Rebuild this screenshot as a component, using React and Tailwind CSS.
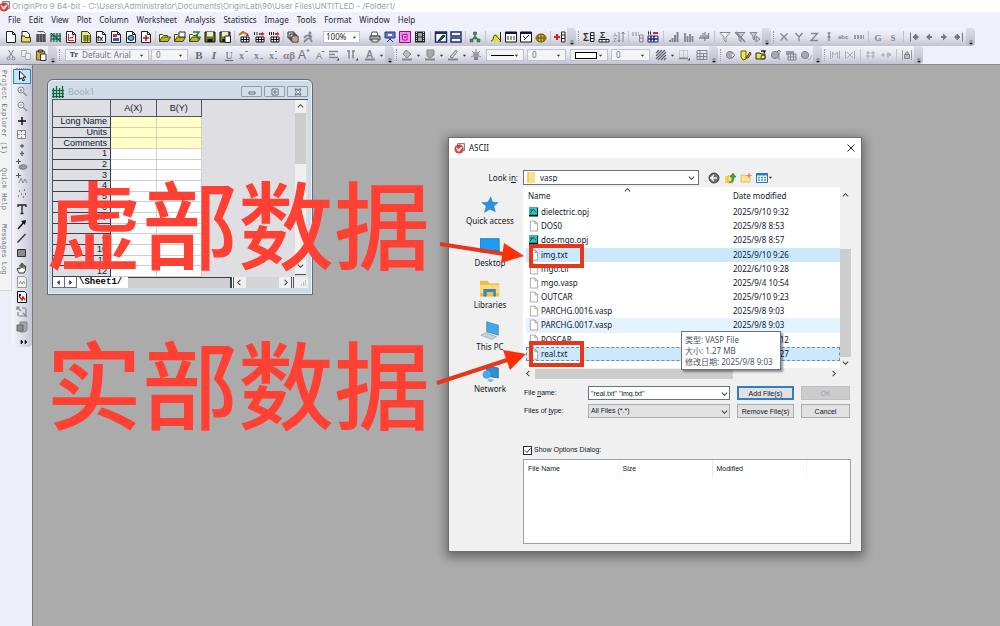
import React from 'react';

const menus = ['File', 'Edit', 'View', 'Plot', 'Column', 'Worksheet', 'Analysis', 'Statistics', 'Image', 'Tools', 'Format', 'Window', 'Help'];

const standardBar = [
    'new project', 'new folder', 'new workbook', 'new matrix', 'new graph', 'new excel', 'new function', 'new layout', 'new web', 'new note', '|',
    'open', 'open template', 'open excel', 'save', 'save template', '|',
    'import wizard', 'import single', 'import multiple', '|', 'batch', 'run', 'space',
    'zoom', 'gap', 'print', 'slide show', 'send graph', 'video', '||',
    'custom routine', 'results log', '|', 'project explorer', '||',
    'graph window', 'command window', 'script window', 'code builder', '|', 'add column', 'more', 'grip',
    'column stats', 'row stats', 'sort', '|', 'set values', 'random values', '||',
    'bars up', 'bars mixed', 'bars pair', '||', 'filter', 'filter off', 'filter apply', 'more', 'grip',
    'set x', 'set y', 'set z', 'set error', 'set label', 'set none', '|', 'group', 'subject', '||',
    'first', 'previous', 'next', 'last', 'more',
];

const formatBar = [
    'cut', 'copy', 'paste', 'more', 'grip', 'pad',
    'font', 'size', 'pad', 'bold', 'italic', 'underline', 'superscript', 'subscript', 'supersub', 'greek', 'bigger', 'smaller', 'align', 'pad', 'spacing', 'pad',
    'font color', 'caret', 'more', 'grip',
    'fill color', 'caret', 'pattern color', 'caret', 'line color', 'caret', 'lighting',
    'line style', 'line width', 'border style', 'border width',
    'hatch', 'caret', 'border bottom', 'pad', 'border grid', 'more', 'grip',
    'mask', 'mask tool', 'mask folder', 'mask swap', 'mask grid', 'mask toggle', 'more', 'grip',
    'merge', 'unmerge', '||', 'align left', 'align right', '||', 'lock', 'more',
];

const tools = [
    'pointer', 'zoom in', 'zoom out', 'screen reader', 'data reader', 'data selector', 'mask points', 'draw data', 'cluster',
    'text', 'arrow', 'line', 'rectangle', 'pan', 'insert equation', 'insert graph', 'rescale', 'rotate',
];

const files = [
    { name: 'dielectric.opj', date: '2025/9/10 9:32', type: 'opj' },
    { name: 'DOS0', date: '2025/9/8 8:53', type: 'file' },
    { name: 'dos-mgo.opj', date: '2025/9/8 8:57', type: 'opj' },
    { name: 'img.txt', date: '2025/9/10 9:26', type: 'file', row: 'bg-[#cce8ff]' },
    { name: 'mgo.cif', date: '2022/6/10 9:28', type: 'file' },
    { name: 'mgo.vasp', date: '2025/9/4 10:54', type: 'file' },
    { name: 'OUTCAR', date: '2025/9/10 9:23', type: 'file' },
    { name: 'PARCHG.0016.vasp', date: '2025/9/8 9:03', type: 'file' },
    { name: 'PARCHG.0017.vasp', date: '2025/9/8 9:03', type: 'file', row: 'bg-[#e5f3ff]' },
    { name: 'POSCAR', date: '2025/9/10 9:12', type: 'file' },
    { name: 'real.txt', date: '2025/9/10 9:27', type: 'file', row: 'bg-[#cce8ff] outline-1 -outline-offset-1 outline-dashed outline-[#6f8ba3]' },
];

const G = '#85858f';

// page outline with a folded corner, reused by all the "new ..." buttons
const Page = ({ children }) => (
    <>
        <path d="M1.5.5h6l3 3v8h-9z" fill="#fff" stroke="#222" />
        <path d="M7.500.5v3h3" fill="none" stroke="#222" />
        {children}
    </>
);

const Letter = ({ children, bold, italic, fill = G, size = 11, font = 'Liberation Sans' }) => (
    <text x="6" y="10" textAnchor="middle" fontSize={size} fill={fill} fontFamily={font} fontWeight={bold ? 700 : 400} fontStyle={italic ? 'italic' : 'normal'}>
        {children}
    </text>
);

const sheetGrid = <path d="M1 4h10M1 6h10M1 8h10M1 10h10M3 3v8M6 3v8M9 3v8" stroke="#222" fill="none" />;
const openFolder = (
    <>
        <path d="M.5 10.500V3.500h3l1 1h4v2" fill="#ffffb0" stroke="#4a4a10" />
        <path d="M.5 10.500l2.500-4.500h8.500l-2.500 4.500z" fill="#b5b52c" stroke="#4a4a10" />
    </>
);
const floppy = (
    <>
        <path d="M1 1h10v10H1z" fill="#6b7a1c" stroke="#111" />
        <path d="M3 1h6v4.500H3z" fill="#e8ecd4" />
        <path d="M3.500 8h5v3h-5z" fill="#111" />
    </>
);
const importTable = (
    <>
        <path d="M3 6h8v5H3z" fill="#fff" stroke="#111" />
        <path d="M3 8.500h8M5.500 6v5M8.500 6v5" stroke="#111" />
    </>
);
const circleMask = <circle cx="5" cy="6" r="3.600" fill="#a9a9b2" stroke={G} />;

const drawings = {
    'new project': <Page />,
    'new folder': <><path d="M2 .5h5l2.500 3v4H2z" fill="#fff" stroke="#222" /><path d="M1.500 11V5h3l1 1.500h5V11z" fill="#e8e04a" stroke="#333" /></>,
    'new workbook': <><path d="M2.500.5h6l2 2" fill="none" stroke="#555" />{sheetGrid}</>,
    'new matrix': <><path d="M1 2h10v9H1z" fill="#9fd8c8" /><path d="M1 2l10 9M1 2v9M4 2v9M7 2v9M10 2v9M1 5h10M1 8h10" stroke="#17443c" fill="none" /></>,
    'new graph': <Page><path d="M3.500 3v6.500H9M4.500 8l1.500-2 1 1.500 1.500-3" fill="none" stroke="#d0202a" /></Page>,
    'new excel': <><path d="M1.500.5h6l3 3v8h-9z" fill="#e6ea7a" stroke="#3c4414" /><path d="M3 5h7M3 7h7M3 9h7M5 4v7M7.500 4v7" stroke="#4d5a14" /></>,
    'new function': <Page><text x="2" y="9.500" fontSize="7" fontWeight="700" fontFamily="Liberation Sans" fill="#111">fx</text></Page>,
    'new layout': <Page><path d="M3 3h4v3H3z" fill="#e0292e" /><path d="M3 7h6v3H3z" fill="#3a53c8" /></Page>,
    'new web': <Page><ellipse cx="6" cy="7" rx="3" ry="2.500" fill="#4cc0c0" stroke="#116" /></Page>,
    'new note': <Page><path d="M6 4v6M3 7h6" stroke="#b0101a" strokeWidth="1.500" /></Page>,
    open: openFolder,
    'open template': <>{openFolder}<path d="M5 1h6v5H5z" fill="#fff" stroke="#333" /></>,
    'open excel': <>{openFolder}<path d="M4 1h6l-3 4 4 4" fill="none" stroke="#20803a" strokeWidth="1.500" /></>,
    save: floppy,
    'save template': <>{floppy}<path d="M6 5h5.500v6.500H6z" fill="#fff" stroke="#222" /></>,
    'import wizard': <>{importTable}<path d="M1 4l4-3 5 3" fill="none" stroke="#c07010" strokeWidth="2" /><path d="M9 2l2 3H8z" fill="#d22" /></>,
    'import single': <>{importTable}<path d="M1.500 1v3M4 1v3" stroke="#222" /><path d="M6 2h3V.5L11.500 3 9 5V4H6z" fill="#d42a2a" /></>,
    'import multiple': <>{importTable}<path d="M1.500 1v3M3.500 1v3M5.500 1v3" stroke="#222" /><path d="M7 2h2V.5L11.500 3 9 5V4H7z" fill="#d42a2a" /></>,
    batch: <><path d="M1 1h6v6H1zM3 3h6v6H3z" fill="#eee" stroke="#222" /><path d="M5 5h6v6H5z" fill="#fff" stroke="#222" /><path d="M6 7h4M6 9h4" stroke="#c22" /></>,
    run: <><circle cx="8" cy="2" r="1.500" fill={G} /><path d="M7 4L4 5 2 7M7 4l1 3-3 1-3 3M8 7l2 4M7 4l3 2" fill="none" stroke={G} strokeWidth="1.800" /></>,
    print: <><path d="M3 1h5l1 4H2z" fill="#fff" stroke="#555" /><path d="M1 5h10v4H1z" fill="#aaa" stroke="#444" /><path d="M3 8h6v3H3z" fill="#ddd" stroke="#555" /></>,
    'slide show': <><path d="M1 1h10v6H1z" fill="#5b78d8" stroke="#223a80" /><path d="M4 3h4v2H4z" fill="#fff" /><path d="M6 7v2M3 11l3-3 3 3" stroke="#223a80" fill="none" /></>,
    'send graph': <><path d="M.5.5h11v11H.5z" fill="#f88af0" stroke="#8a1080" /><path d="M3 4l5-1v6H4z" fill="#fbc0f2" stroke="#a0108c" /><circle cx="6" cy="6" r="1" fill="#a0108c" /></>,
    video: <><path d="M1 .5h10v11H1z" fill="#222" /><path d="M4 2h4v3.500H4zM4 6.500h4V10H4z" fill="#9aa" /><path d="M2.500 1v10M9.500 1v10" stroke="#ddd" strokeDasharray="1 1" /></>,
    'custom routine': <><path d="M.500 1h11v10H.5z" fill="#fff" stroke="#1a2d66" strokeWidth="1.500" /><path d="M.5 2h11" stroke="#1a2d66" strokeWidth="2" /><path d="M3 10l5-6 2 1-4 4z" fill="#163" stroke="#124" /></>,
    'results log': <><path d="M1 1h10v4H1zM1 7h10v4H1z" fill="#f2f3ff" stroke="#1c2a72" strokeWidth="1.500" /></>,
    'project explorer': <><path d="M6 3v3M6 6L2.500 9M6 6l3.500 3" stroke="#222" fill="none" /><path d="M4.500 1h3v2.500h-3zM1 8h3v3H1zM8 8h3v3H8zM4.500 6h3v2h-3z" fill="#3d9a55" stroke="#1c4a2a" strokeWidth=".5" /></>,
    'graph window': <><path d="M1 9c3 0 2-6 5-6s2 4 5 4v4H1z" fill="#e4dc3c" /><path d="M1 10c3 0 2-6 4-6s3 5 6 5" stroke="#1a6a30" fill="none" /><path d="M10.500 1v10" stroke="#222" /></>,
    'command window': <><path d="M.5 1h11v10H.5z" fill="#fff" stroke="#111" /><path d="M.5 2h11" stroke="#113" strokeWidth="2" /><path d="M2 6h8M2 8h8" stroke="#333" strokeDasharray="2 1" /></>,
    'script window': <><path d="M.5 1h11v10H.5z" fill="#fff" stroke="#111" /><path d="M.5 2h11" stroke="#113" strokeWidth="2" /><path d="M4 9l5-5M3 5l3 3" stroke="#222" /></>,
    'code builder': <><ellipse cx="6" cy="7" rx="5" ry="4" fill="#d8c024" stroke="#5a4c08" /><path d="M3 4v6M6 3v8M9 4v6M2 7h8" stroke="#5a4c08" /></>,
    'add column': <><path d="M3 3v6M0 6h6" stroke="#d8202a" strokeWidth="2" /><path d="M7.500 1h3.500v10H7.500zM7.500 4H11M7.500 7.500H11" fill="#fff" stroke="#222" /></>,
    'column stats': <><text x="0" y="9.500" fontSize="10" fontWeight="700" fontFamily="Liberation Sans" fill="#333">Σ</text><path d="M7.500 1.500h3.500v9H7.500zM7.500 4.500H11M7.500 7.500H11" fill="#fff" stroke="#222" /></>,
    'row stats': <><text x="2" y="7" fontSize="9" fontWeight="700" fontFamily="Liberation Sans" fill="#333">Σ</text><path d="M1 8.500h10v2.500H1zM4 8.500V11M8 8.500V11" fill="#fff" stroke="#222" /></>,
    sort: <><text x="0" y="5.500" fontSize="6" fontFamily="Liberation Sans" fill={G}>A</text><text x="0" y="11" fontSize="6" fontFamily="Liberation Sans" fill={G}>Z</text><path d="M6 1v10M4.500 9L6 11l1.500-2M10 11V1M8.500 3L10 1l1.500 2" stroke={G} fill="none" /></>,
    'set values': <><path d="M0 2h7M0 4h7" stroke={G} strokeDasharray="2 1" /><path d="M7.500 4h3.500v7H7.500zM7.500 7H11" fill="none" stroke={G} /></>,
    'random values': <><path d="M1 5h10v6H1z" fill="#fff" stroke="#23237c" /><path d="M4 5v6M7 5v6M1 8h10" stroke="#23237c" strokeWidth="1.500" /><path d="M1 2h4" stroke="#223" strokeWidth="3" strokeDasharray="1 1" /><path d="M6 2h5" stroke="#d22" strokeWidth="2" /></>,
    'bars up': <path d="M2 9v2M4.500 7v4M7 4v7M9.500 1v10" stroke={G} strokeWidth="2" />,
    'bars mixed': <path d="M2 2v9M4.500 5v6M7 3v8M9.500 5v6" stroke={G} strokeWidth="1.800" />,
    'bars pair': <path d="M1 7h10M3 4v3M5 2v5M7 1v9M9 4v3M10.500 2v5" stroke={G} strokeWidth="1.300" />,
    filter: <path d="M1 1.500h10L7 6v5L5 9V6z" fill="#fff" stroke={G} />,
    'filter off': <><path d="M1 1.500h10L7 6v5L5 9V6z" fill="#ccc" stroke={G} /><path d="M2 1l9 10" stroke={G} strokeWidth="1.500" /></>,
    'filter apply': <><path d="M1 1.500h7L5.500 5v4L4 8V5z" fill="#ccc" stroke={G} /><path d="M7 5l4 3-4 3z" fill="#ccc" stroke={G} /></>,
    'set x': <path d="M2.500 2.500l7 7M9.500 2.500l-7 7" stroke={G} strokeWidth="1.300" />,
    'set y': <path d="M2.500 2l3.500 4L9.500 2M6 6v4.500" stroke={G} strokeWidth="1.300" fill="none" />,
    'set z': <path d="M3 2.500h6.500L3 9.500h7" stroke={G} strokeWidth="1.300" fill="none" />,
    'set error': <path d="M4.500 2h3M6 2v8M4.500 6h3" stroke={G} strokeWidth="1.300" />,
    'set label': <text x="0" y="8" fontSize="6" fontWeight="700" fontFamily="Liberation Sans" fill={G}>abc</text>,
    'set none': <path d="M1 5h10M1 7h10" stroke={G} strokeDasharray="2 1" strokeWidth="1.500" />,
    group: <Letter font="Liberation Serif" bold size={9}>G</Letter>,
    subject: <Letter font="Liberation Serif" bold size={9}>S</Letter>,
    first: <path d="M2.500 1.500v9M10 5H8V3L5 6l3 3V7h2z" fill="#777782" stroke="#777782" />,
    previous: <path d="M9 5H7V2.500L3 6l4 3.500V7h2z" fill="#777782" />,
    next: <path d="M3 5h2V2.500L9 6 5 9.500V7H3z" fill="#777782" />,
    last: <path d="M9.500 1.500v9M2 5h2V3l3 3-3 3V7H2z" fill="#777782" stroke="#777782" />,
    cut: <><path d="M3.500 1L8 8M8.500 1L4 8" stroke={G} /><circle cx="3.500" cy="9.500" r="1.500" fill="none" stroke={G} /><circle cx="8.500" cy="9.500" r="1.500" fill="none" stroke={G} /></>,
    copy: <><path d="M1.500 1.500h5v6h-5z" fill="#eee" stroke="#aaaab2" /><path d="M5.500 4.500h5v6h-5z" fill="#eee" stroke="#aaaab2" /></>,
    paste: <><path d="M1.500 2h8v9h-8z" fill="#d0aa30" stroke="#6a5010" /><path d="M3.500 1h4v2h-4z" fill="#999" stroke="#333" /><path d="M5.500 5h5.500v6.500H5.500z" fill="#fff" stroke="#334" /></>,
    bold: <Letter bold font="Liberation Serif" fill="#6a6a74">B</Letter>,
    italic: <Letter bold italic font="Liberation Serif" fill="#6a6a74">I</Letter>,
    underline: <><Letter font="Liberation Serif" fill="#6a6a74" size={10}>U</Letter><path d="M2 11.500h8" stroke="#6a6a74" /></>,
    superscript: <><text x="1" y="9.500" fontSize="10" fontFamily="Liberation Serif" fontWeight="700" fill={G}>x</text><path d="M7 2.500h3" stroke={G} /></>,
    subscript: <><text x="1" y="9.500" fontSize="10" fontFamily="Liberation Serif" fontWeight="700" fill={G}>x</text><path d="M7 9.500h3" stroke={G} /></>,
    supersub: <><text x="1" y="9.500" fontSize="10" fontFamily="Liberation Serif" fontWeight="700" fill={G}>x</text><path d="M7 2.500h2M7 9.500h2" stroke={G} /></>,
    greek: <Letter font="Liberation Serif" size={11} bold>αβ</Letter>,
    bigger: <><text x="0" y="10" fontSize="12" fontFamily="Liberation Sans" fill="#6a6a74">A</text><path d="M10 0v3M8.500 1.500h3" stroke={G} /></>,
    smaller: <><Letter size={9} fill="#6a6a74">A</Letter><path d="M8.500 2.500h3" stroke={G} /></>,
    align: <><path d="M1 2.500h9M1 5.500h6M1 8.500h9" stroke={G} strokeWidth="1.500" /><path d="M11 9v2.500H8.500z" fill="#444" /></>,
    spacing: <><path d="M3 1.500v8M7 1.500v8M1 2h3M6 2h3" stroke={G} strokeWidth="1.500" /><path d="M12 9v2.500H9.500z" fill="#444" /></>,
    'font color': <><text x="2" y="8.500" fontSize="10" fontFamily="Liberation Sans" fontWeight="700" fill={G}>A</text><path d="M1 10.500h10" stroke={G} strokeWidth="2" /></>,
    'fill color': <><path d="M5 1l5 4-4 4-4-4z" fill="#bbb" stroke={G} /><path d="M1 10.500h10" stroke={G} strokeWidth="2" /></>,
    'pattern color': <><path d="M3 1h7v5l-4 3-3-2z" fill="#aaa" stroke={G} /><path d="M1 10.500h10" stroke={G} strokeWidth="2" /></>,
    'line color': <><path d="M3 8l6-7 1.500 1.500L5 9z" fill="#ccc" stroke={G} /><path d="M1 10.500h10" stroke={G} strokeWidth="2" /></>,
    lighting: <><path d="M6 0v3M2 2l2 2M10 2L8 4M1 8l2-1M11 8L9 7" stroke={G} /><circle cx="6" cy="6" r="3" fill="#9a9aa4" /><path d="M4 8h4v3H4z" fill={G} /></>,
    hatch: <path d="M1 4l3-3M1 7l6-6M1 10l9-9M3 11l8-8M6 11l5-5M9 11l2-2" stroke="#666670" strokeWidth="1.300" />,
    'border bottom': <><path d="M1.500 1.500h8v7h-8zM5.500 1.500v7" fill="none" stroke="#aaaab2" strokeDasharray="1 1" /><path d="M1 9.500h9" stroke={G} strokeWidth="1.500" /><path d="M12 9v2.500H9.500z" fill="#444" /></>,
    'border grid': <path d="M1 1.500h10v9H1zM1 4.500h10M1 7.500h10M4 1.500v9M7.500 4.500v6" fill="none" stroke={G} />,
    mask: <>{circleMask}<path d="M7 4l3 2-3 3" fill="#fff" stroke={G} /></>,
    'mask tool': <><path d="M1 2h5v8l-3 1-2-3z" fill="#f2e63a" stroke="#6a5e08" /><path d="M6 9l4-6 1 2-3 4z" fill="#c93" stroke="#532" /></>,
    'mask folder': <><path d="M1 4h4l1 1h4v5H1z" fill="#f0e43c" stroke="#222" /><path d="M6 2h4l-1 2" stroke="#222" fill="none" strokeWidth="1.500" /><circle cx="8" cy="8" r="2" fill="#fff380" stroke="#333" /></>,
    'mask swap': <>{circleMask}<path d="M9 1v10M7 3l2-2 2 2" stroke={G} fill="none" /></>,
    'mask grid': <><path d="M1 2h8v4H1z" fill="#99a" /><path d="M3 5h8v6H3zM5.500 5v6M8.500 5v6M3 8h8" fill="#ddd" stroke={G} /></>,
    'mask toggle': <>{circleMask}<path d="M7 9l2 2 3-5" stroke="#b0b0b8" fill="none" /></>,
    merge: <path d="M1.500 2v8M10.500 2v8M3.500 9V3L6 6l2.500-3v6" stroke="#aaaab4" fill="none" />,
    unmerge: <path d="M1.500 2v8M10.500 2v8M3 3l6 6M9 3L3 9" stroke="#aaaab4" fill="none" />,
    'align left': <path d="M3 2v8M1 4h4M1 7h4M8 2v8M6 4h4M6 7h4" stroke="#aaaab4" />,
    'align right': <path d="M1 6h4M3 4v4M6 6h5M8 3v6M10 4v3" stroke="#aaaab4" strokeWidth="1.200" />,
    lock: <><path d="M1.500 1v10M10.500 1v10" stroke="#9a9aa4" /><path d="M3.500 5.500h5v4h-5zM4.500 5c0-3 3-3 3 0" fill="#bbb" stroke={G} /></>,
    pointer: <path d="M3.500 1v8.500l2-1.800L7 11l1.500-.7L7 7.200h2.700z" fill="#fff" stroke="#111" />,
    'zoom in': <><circle cx="5" cy="5" r="3" fill="#fff" stroke={G} /><path d="M7.500 7.500L11 11M3.500 5h3M5 3.500v3" stroke={G} strokeWidth="1.200" /></>,
    'zoom out': <><circle cx="5" cy="5" r="3" fill="#fff" stroke={G} /><path d="M7.500 7.500L11 11M3.500 5h3" stroke={G} strokeWidth="1.200" /></>,
    'screen reader': <path d="M6 2v8M2 6h8" stroke="#111" strokeWidth="1.500" />,
    'data reader': <path d="M1.500 1.500h8v8h-8zM5.500 1.500v2M5.500 7.500v2M1.500 5.500h2M7.500 5.500h2M5 5.500h1" fill="#f7f7fb" stroke={G} />,
    'data selector': <path d="M6 0v4M4 2h4M6 7v5M4 9.500h4" stroke="#666" strokeWidth="1.300" />,
    'mask points': <><path d="M2.500 0v5M0 2.500h5" stroke="#555" /><ellipse cx="7" cy="8" rx="4" ry="2.200" fill="#999aa2" stroke="#777" /></>,
    'draw data': <><path d="M2.500 0v5M0 2.500h5" stroke="#555" /><path d="M3 10l2-5 2 5 2-4 2 4" fill="none" stroke={G} /></>,
    cluster: <path d="M3 3h1M8 2h1M5 6h1M9 6h1M2 8h1M7 9h1" stroke="#666" strokeWidth="1.500" />,
    text: <path d="M2 4V2h8v2M6 2v8.500M4.500 10.500h3" fill="none" stroke="#222" strokeWidth="1.300" />,
    arrow: <><path d="M2 11L8 4" stroke="#111" strokeWidth="1.500" /><path d="M10 2L9 7 5 3z" fill="#111" /></>,
    line: <path d="M1.500 10.500l8-8.500" stroke="#333" strokeWidth="1.300" />,
    rectangle: <path d="M1.500 2.500h8v7h-8z" fill="#8c8c8c" stroke="#333" />,
    pan: <path d="M3 11L1 7l1-1 2 1V3h1.300V1.500h1.400V3H8v1h1.500v4l-1.500 3zM5.300 3v3M6.700 3v3M8 4v3" fill="#fff" stroke="#222" strokeWidth=".9" />,
    'insert equation': <path d="M1.500.5h7l2 2v9h-9zM3 8l1.500-3L6 8l1.500-3L9 8" fill="#f2f2f6" stroke="#999" />,
    'insert graph': <><path d="M1.500.5h7l2 2v9h-9z" fill="#fff" stroke="#111" /><path d="M3 5l3 4 1-3 2 3" stroke="#c02020" strokeWidth="1.500" fill="none" /><path d="M3 4h2" stroke="#222" strokeWidth="2" /></>,
    rescale: <path d="M1 1l4 4M1 4V1h3M11 11L7 7M3 10h7V3M2 6v4M6 2h4" stroke={G} fill="none" strokeWidth="1.200" />,
    rotate: <><path d="M4 1h7v8l-2 2H4z" fill="#a5a5ad" stroke={G} /><path d="M1 4h6v6H1z" fill="#8d8d96" stroke="#666" /></>,
};

const Icon = ({ name }) => (
    <svg viewBox="0 0 12 12" className="size-3 overflow-visible" aria-hidden="true">{drawings[name]}</svg>
);

const Chevron = ({ dir = 'down', className = '' }) => {
    const paths = { down: 'M1 3l3 3 3-3', up: 'M1 5l3-3 3 3', left: 'M5 1L2 4l3 3', right: 'M3 1l3 3-3 3' };
    return (
        <svg viewBox="0 0 8 8" className={`size-[7px] ${className}`} aria-hidden="true">
            <path d={paths[dir]} fill="none" stroke="#444" strokeWidth="1.200" />
        </svg>
    );
};

const Triangle = () => (
    <svg viewBox="0 0 6 6" className="w-[5px] h-[5px]" aria-hidden="true"><path d="M1 2h4L3 4.500z" fill="#333" /></svg>
);

const Combo = ({ label, className, children }) => (
    <button aria-label={label} className={`h-3 flex items-center justify-between border border-[#c2c2ce] bg-[#f3f3f8] px-1 text-[8px] leading-none text-gray-500 shrink-0 ${className}`}>
        {children}
        <Triangle />
    </button>
);

const BarItem = ({ name }) => {
    switch (name) {
        case '|':
            return <span className="w-1 h-3 flex justify-center shrink-0"><span className="w-px h-full bg-[#c3c3d2]"></span></span>;
        case '||':
            return <span className="w-[6px] h-3 flex justify-center shrink-0"><span className="w-px h-full bg-[#c3c3d2]"></span></span>;
        case 'gap':
            return <span className="w-[7px] shrink-0"></span>;
        case 'space':
            return <span className="w-2 shrink-0"></span>;
        case 'pad':
            return <span className="w-[3px] shrink-0"></span>;
        case 'grip':
            return <span className="w-[5px] h-3 flex justify-center shrink-0"><span className="border-l border-dotted border-[#9a9ab0] h-full"></span></span>;
        case 'more':
            return (
                <button aria-label="Toolbar options" className="w-[9px] h-full flex items-end justify-center rounded-r-sm bg-gradient-to-b from-[#dcdce6] to-[#bcbcc8] shrink-0">
                    <svg viewBox="0 0 6 6" className="w-[6px] h-[6px]" aria-hidden="true"><path d="M1.500 1h3M1.500 3h3L3 4.500z" fill="#111" stroke="#111" strokeWidth=".5" /></svg>
                </button>
            );
        case 'caret':
            return <button aria-label="Choose" className="w-2 h-full flex items-center justify-center shrink-0"><Triangle /></button>;
        case 'zoom':
            return <Combo label="Zoom" className="w-[37px] !bg-white !text-gray-800 !px-[2px]">100%</Combo>;
        case 'font':
            return (
                <Combo label="Font" className="w-[84px] mr-[2px]">
                    <span className="flex items-center gap-1"><b className="font-serif text-gray-700">Tr</b><span>Default: Arial</span></span>
                </Combo>
            );
        case 'size':
            return <Combo label="Font size" className="w-[37px]">0</Combo>;
        case 'line style':
            return <Combo label="Line style" className="w-[38px] ml-[3px] mr-[3px]"><span className="w-6 h-px bg-black"></span></Combo>;
        case 'line width':
            return <Combo label="Line width" className="w-[39px] mr-[4px]">0</Combo>;
        case 'border style':
            return <Combo label="Border style" className="w-[38px] mr-[3px]"><span className="w-[22px] h-[7px] border border-black bg-white"></span></Combo>;
        case 'border width':
            return <Combo label="Border width" className="w-[39px] mr-[3px]">0</Combo>;
        default:
            return <button aria-label={name} className="w-[15px] h-full flex items-center justify-center shrink-0"><Icon name={name} /></button>;
    }
};

const Toolbar = ({ label, items }) => (
    <div className="flex">
        <div role="toolbar" aria-label={label} className="flex items-center h-[18px] pl-[3px] rounded-r bg-gradient-to-b from-[#f3f3fb] via-[#e4e4ef] to-[#c3c3d0]">
            {items.map((name, index) => <BarItem key={index} name={name} />)}
        </div>
    </div>
);

const OriginLogo = () => (
    <svg viewBox="0 0 12 12" className="size-[11px] shrink-0" aria-hidden="true">
        <path d="M4 .5h7.500v8H4z" fill="#dde" stroke="#777" />
        <circle cx="5.500" cy="6.500" r="5" fill="#d2453f" />
        <path d="M2.500 5l3 4 3.500-5M3 8l5-3" stroke="#fff" fill="none" strokeWidth="1.100" />
    </svg>
);

const ToolPalette = () => (
    <div className="w-5 self-start rounded-b bg-gradient-to-r from-[#f4f5fc] to-[#c6c8d6] pb-[2px]">
        <div className="h-1 mx-1 border-b border-dotted border-[#9a9ab0]"></div>
        <div className="grid auto-rows-fr h-[265px]">
            {tools.map((name) => (
                <button
                    key={name}
                    aria-label={name}
                    className={`flex items-center justify-center mx-[1px] ${name === 'pointer' ? 'border border-[#3c7fb1] bg-[#c3e4f7]' : ''}`}
                >
                    <Icon name={name} />
                </button>
            ))}
        </div>
        <div className="h-[11px] flex items-end justify-end px-1">
            <svg viewBox="0 0 8 6" className="w-2 h-[6px]" aria-hidden="true"><path d="M1 1l2 2-2 2zM5 1v4l2-2z" fill="#111" stroke="#111" strokeWidth=".6" /></svg>
        </div>
    </div>
);

const WindowButton = ({ label, path }) => (
    <button aria-label={label} className="w-[21px] h-[11px] flex items-center justify-center rounded-[1px] border border-[#8e9db0] bg-[#d3dfeb]">
        <svg viewBox="0 0 8 8" className="size-2" aria-hidden="true"><path d={path} fill="#fff" stroke="#566478" /></svg>
    </button>
);

const BookWindow = () => (
    <section aria-label="Book1" className="absolute left-[14px] top-[14px] w-[266px] rounded-t-md border border-[#5f6c7b] bg-[#cfdbe7] px-[4px] pb-[6px] shadow-[inset_0_0_0_1px_#eaf1f8]">
        <header className="flex items-center h-[19px] gap-1 pt-1 text-[#a3b0bd] font-['Noto_Sans'] text-[9px]">
            <svg viewBox="0 0 12 12" className="size-3" aria-hidden="true">
                <path d="M1 3h10v8H1z" fill="#fff" />
                <path d="M0 4.500h12M0 7.500h12M0 10.500h12M1.500 2v10M4.500 0v12M7.500 2v10M10.500 0v12" stroke="#0c6b3c" strokeWidth="1.300" />
            </svg>
            <span>Book1</span>
            <div className="ml-auto flex gap-[2px]">
                <WindowButton label="Minimize" path="M1 4h6v2H1z" />
                <WindowButton label="Restore" path="M1 1h6v6H1zM3 3h2v2H3z" />
                <WindowButton label="Close" path="M1 1h2l1 2 1-2h2L5.500 4 7 7H5L4 5 3 7H1l1.500-3z" />
            </div>
        </header>
        <div className="flex border-t border-l border-gray-600 bg-[#dfdee3]">
            <table className="w-[149px] h-[177px] table-fixed border-separate border-spacing-0 font-['Liberation_Sans'] text-[9px] leading-[9px] text-gray-900">
                <thead>
                    <tr className="h-[17px]">
                        <th className="w-[58px] border-r border-b border-gray-600"></th>
                        <th className="font-normal border-r border-b border-gray-600">A(X)</th>
                        <th className="font-normal border-r border-b border-gray-600">B(Y)</th>
                    </tr>
                </thead>
                <tbody>
                    {['Long Name', 'Units', 'Comments', 1, 2, 3, 4, 5, 6, 7, 8, 9, 10, 11, 12].map((title, index) => {
                        const cell = index < 3 ? 'border-r border-b border-[#d6d6b4] bg-[#ffffc6]' : 'border-r border-b border-[#cfcfd2] bg-white';
                        return (
                            <tr key={title}>
                                <th className="p-0 pr-[3px] text-right font-normal border-r border-b border-gray-700">{title}</th>
                                <td className={cell}></td>
                                <td className={cell}></td>
                            </tr>
                        );
                    })}
                </tbody>
            </table>
            <div className="ml-auto mr-[2px] w-[11px] flex flex-col items-center bg-[#f0f0f0]">
                <Chevron dir="up" className="my-[3px]" />
                <div className="w-full h-[51px] bg-[#cdcdcd]"></div>
                <Chevron className="mt-auto mb-[5px]" />
                <div className="w-full border-t border-gray-600 h-[3px] bg-[#dfdee3]"></div>
            </div>
        </div>
        <footer className="flex items-stretch h-[11px] bg-[#f0f0f0] border-l border-gray-600">
            {['left', 'right'].map((dir) => (
                <button key={dir} aria-label={`Sheets ${dir}`} className="w-3 flex items-center justify-center border-r border-b border-gray-500 bg-white">
                    <svg viewBox="0 0 6 6" className="size-[5px]" aria-hidden="true"><path d={dir === 'left' ? 'M4.500 0v6L1 3z' : 'M1.500 0v6L5 3z'} fill="#333" /></svg>
                </button>
            ))}
            <span className="w-[51px] bg-white pl-[2px] font-['Liberation_Mono'] font-bold text-[9px] leading-[11px] whitespace-nowrap">\Sheet1/</span>
            <span className="flex-1 bg-[#cfcfd2] border-t border-r-2 border-gray-700"></span>
            <span className="w-[2px] bg-white border-r border-gray-600"></span>
            <span className="w-[57px] flex items-center justify-between px-[2px]">
                <Chevron dir="left" />
                <span className="w-[33px] h-full bg-[#d4d4d4]"></span>
                <Chevron dir="right" />
            </span>
            <span className="w-[3px] border-x border-gray-600"></span>
            <span className="w-[14px] flex items-end justify-end p-[2px]">
                <svg viewBox="0 0 6 6" className="size-[6px]" aria-hidden="true"><path d="M5 1h1M3 3h1M5 3h1M1 5h1M3 5h1M5 5h1" stroke="#999" /></svg>
            </span>
        </footer>
    </section>
);

const placeIcons = {
    'Quick access': <path d="M13 2l2 6.500 7 .6-5.300 4.200 1.700 7L12 17l-6.800 4 2.200-7.600L2 9.100l7.500-.6z" fill="#2b93dd" stroke="#1f7fc6" strokeWidth=".5" />,
    Desktop: <><path d="M0 2h23v16H0z" fill="#1f9bf0" stroke="#1577bd" /><path d="M0 16h23v2H0z" fill="#1167a8" /></>,
    Libraries: <><path d="M0 2h9l2 3h12v16H0z" fill="#e9bf45" /><path d="M0 7h23v10H0z" fill="#f9d978" /><path d="M4 21v-9h15v9h-3v-5H8v5z" fill="#4384b5" /></>,
    'This PC': <><path d="M8 1l14 4v12L8 13z" fill="#3fa9ee" stroke="#55778f" strokeWidth=".8" /><path d="M7 14l13 5-6 3-13-5z" fill="#c9d2d8" stroke="#8a979f" strokeWidth=".7" /></>,
    Network: <><path d="M7 3l15 3v12L9 16z" fill="#2c8ed8" stroke="#456" strokeWidth=".8" /><circle cx="8" cy="14" r="5" fill="#4aa8e6" /><path d="M11 19l6 1-4 3-4-2z" fill="#7fb4d8" /></>,
};

const FileIcon = ({ type }) => (
    <svg viewBox="0 0 11 12" className="w-[10px] h-3 shrink-0" aria-hidden="true">
        {type === 'opj' ? (
            <>
                <path d="M0 1h10v10H0z" fill="#111" />
                <path d="M0 1h9v8H0z" fill="#2fc8c2" />
                <path d="M1 7c2 0 2-4 3.500-4S6 6 8 6M1 4h3" stroke="#0a4a50" fill="none" />
            </>
        ) : (
            <path d="M1.500.5h5l3 3v8h-8zM6.500.5v3h3" fill="#fff" stroke="#8b8b8b" strokeWidth=".8" />
        )}
    </svg>
);

const dialogButton = 'h-[14px] flex items-center justify-center text-[7px] leading-none whitespace-nowrap';

const AsciiDialog = () => (
    <section role="dialog" aria-label="ASCII" className="absolute left-[448px] top-[137px] w-[414px] border border-[#6e6e6e] bg-[#f0f0f0] shadow-[0_3px_10px_2px_rgba(0,0,0,0.4)] font-['Noto_Sans','Noto_Sans_CJK_SC',sans-serif] text-[8px] leading-[10px] text-gray-900">
        <header className="flex items-center h-5 bg-white pl-[5px] pr-[6px] gap-1">
            <OriginLogo />
            <h1>ASCII</h1>
            <button aria-label="Close" className="ml-auto">
                <svg viewBox="0 0 8 8" className="size-2" aria-hidden="true"><path d="M.5.5l7 7M7.500.5l-7 7" stroke="#222" /></svg>
            </button>
        </header>

        <div className="flex pt-[12px] pr-[10px]">
            {/* Places bar */}
            <nav className="w-[74px] shrink-0 flex flex-col">
                <label htmlFor="look-in" className="h-[15px] pr-[5px] text-right leading-[15px]">Look i<u>n</u>:</label>
                <div className="mt-[10px] flex flex-col gap-[11px] pl-2">
                    {Object.keys(placeIcons).map((place) => (
                        <a key={place} href="#" className="h-[31px] flex flex-col items-center justify-between">
                            <svg viewBox="0 0 24 24" className="size-5" aria-hidden="true">{placeIcons[place]}</svg>
                            <span>{place}</span>
                        </a>
                    ))}
                </div>
            </nav>

            <div className="flex-1 min-w-0">
                <div className="flex items-center h-[15px]">
                    <div className="relative w-[176px] flex items-center">
                        <span className="absolute left-1 w-2 h-[11px] bg-[#fbe08a] border-l-2 border-[#f3d060] pointer-events-none"></span>
                        <select id="look-in" className="w-full h-[15px] appearance-none border border-gray-500 bg-white pl-4 leading-none">
                            <option>vasp</option>
                        </select>
                        <Chevron className="absolute right-1 pointer-events-none" />
                    </div>
                    <div className="flex items-center gap-1 pl-[9px]">
                        <button aria-label="Back">
                            <svg viewBox="0 0 12 12" className="size-3"><circle cx="6" cy="6" r="5" fill="#6e6e6e" stroke="#444" /><path d="M9 6H3.500M6 3L3 6l3 3" stroke="#fff" fill="none" strokeWidth="1.500" /></svg>
                        </button>
                        <button aria-label="Up one level">
                            <svg viewBox="0 0 12 12" className="size-3"><path d="M1 4h4v7H1z" fill="#f3d566" /><path d="M4 4l5-1v8H4z" fill="#fae08c" stroke="#c9a23a" strokeWidth=".6" /><path d="M5 10c3 0 3-2 3-5H6l3-4 3 4h-2c0 4-2 6-5 5z" fill="#39a532" stroke="#1d701c" strokeWidth=".5" /></svg>
                        </button>
                        <button aria-label="New folder">
                            <svg viewBox="0 0 12 12" className="size-3"><path d="M1 3h4l1 1h4v6H1z" fill="#fbe394" stroke="#d9b354" strokeWidth=".7" /><path d="M9 1v5M6.500 3.500h5" stroke="#e2803c" strokeWidth="1.200" /></svg>
                        </button>
                        <button aria-label="View menu" className="flex items-center">
                            <svg viewBox="0 0 12 12" className="size-3"><path d="M.5 1.500h11v9H.5z" fill="#fff" stroke="#2a7ab8" /><path d="M.5 2.500h11" stroke="#2a7ab8" strokeWidth="2" /><path d="M2 5.500h8M2 8h8" stroke="#2a9fe0" strokeWidth="1.500" strokeDasharray="2 1" /></svg>
                            <Triangle />
                        </button>
                    </div>
                </div>

                {/* File list */}
                <div className="mt-[2px] bg-white pl-[3px]">
                    <div className="flex">
                        <div className="flex-1 pb-[7px]">
                            <table className="w-full h-[174px] table-fixed border-collapse">
                                <thead>
                                    <tr className="h-[18px]">
                                        <th className="w-[207px] p-0 pl-[2px] text-left font-normal">
                                            <span className="relative block">
                                                Name
                                                <Chevron dir="up" className="absolute left-24 -top-1" />
                                            </span>
                                        </th>
                                        <th className="p-0 text-left font-normal">Date modified</th>
                                    </tr>
                                </thead>
                                <tbody>
                                    {files.map((file) => (
                                        <tr key={file.name} className={file.row}>
                                            <td className="p-0 pl-[3px]">
                                                <span className="flex items-center gap-[2px]"><FileIcon type={file.type} />{file.name}</span>
                                            </td>
                                            <td className="p-0">{file.date}</td>
                                        </tr>
                                    ))}
                                </tbody>
                            </table>
                        </div>
                        <div className="w-[11px] flex flex-col items-center bg-[#f0f0f0]">
                            <Chevron dir="up" className="mt-[5px]" />
                            <div className="w-full h-[108px] mt-auto bg-[#cdcdcd]"></div>
                            <Chevron className="my-[2px]" />
                        </div>
                    </div>
                    <div className="flex items-center h-[11px] -ml-[3px] bg-[#f0f0f0]">
                        <Chevron dir="left" className="ml-[2px] mr-[3px]" />
                        <div className="w-[198px] h-[10px] bg-[#cdcdcd]"></div>
                        <Chevron dir="right" className="ml-auto mr-[14px]" />
                    </div>
                </div>

                {/* File name and type */}
                <div className="grid grid-cols-[65px_142px_64px_56px] gap-y-[4px] mt-[7px] font-['Liberation_Sans',sans-serif] text-[7px]">
                    <label htmlFor="file-name" className="pl-px leading-[14px]">File <u>n</u>ame:</label>
                    <div className="relative flex items-center">
                        <input id="file-name" defaultValue={'"real.txt" "img.txt"'} className="w-full h-[14px] border border-gray-500 bg-white px-[2px]" />
                        <Chevron className="absolute right-[2px] pointer-events-none" />
                    </div>
                    <button className={`${dialogButton} ml-[7px] border-2 border-[#2f7fc2] bg-[#e1e1e1]`}>Add File(s)</button>
                    <button disabled className={`${dialogButton} ml-[7px] border border-[#bfbfbf] bg-[#cccccc] text-gray-400`}>OK</button>
                    <label htmlFor="file-type" className="pl-px leading-[14px]">Files of <u>t</u>ype:</label>
                    <div className="relative flex items-center">
                        <select id="file-type" className="w-full h-[14px] appearance-none border border-[#adadad] bg-[#e1e1e1] px-[2px]">
                            <option>All Files (*.*)</option>
                        </select>
                        <Chevron className="absolute right-[2px] pointer-events-none" />
                    </div>
                    <button className={`${dialogButton} ml-[7px] border border-[#adadad] bg-[#e1e1e1]`}>Remove File(s)</button>
                    <button className={`${dialogButton} ml-[7px] border border-[#adadad] bg-[#e1e1e1]`}>Cancel</button>
                </div>

                <label className="mt-[27px] flex items-center gap-[2px] font-['Liberation_Sans',sans-serif] text-[7px]">
                    <span className="relative flex">
                        <input type="checkbox" defaultChecked className="peer appearance-none size-[9px] border border-gray-800 bg-white" />
                        <svg viewBox="0 0 9 9" className="absolute inset-0 hidden peer-checked:block pointer-events-none" aria-hidden="true"><path d="M2 4.500l2 2 3.500-4" fill="none" stroke="#222" /></svg>
                    </span>
                    Show Options Dialog:
                </label>

                <div className="mt-1 mb-[7px] h-[85px] border border-gray-400 bg-white font-['Liberation_Sans',sans-serif] text-[7px]">
                    <table className="w-full table-fixed">
                        <thead>
                            <tr className="h-[17px] text-left">
                                <th className="w-[94px] pl-1 font-normal border-r border-gray-100">File Name</th>
                                <th className="w-[94px] pl-1 font-normal border-r border-gray-200">Size</th>
                                <th className="w-[94px] pl-1 font-normal border-r border-gray-100">Modified</th>
                                <th></th>
                            </tr>
                        </thead>
                    </table>
                </div>
            </div>
        </div>

        <div role="tooltip" className="absolute left-[232px] top-[193px] w-[100px] border border-gray-500 bg-white py-[2px] pl-[3px] text-[8px] leading-[11px] text-gray-600 shadow-[2px_2px_2px_rgba(0,0,0,0.4)] whitespace-nowrap">
            <p>类型: VASP File</p>
            <p>大小: 1.27 MB</p>
            <p>修改日期: 2025/9/8 9:03</p>
        </div>
    </section>
);

const Annotations = () => (
    <div className="pointer-events-none">
        <p className="absolute left-[46px] top-[166px] whitespace-nowrap font-['Noto_Sans_CJK_SC',sans-serif] font-medium text-[96px] leading-[110px] text-[#ff4033]">虚部数据</p>
        <p className="absolute left-[46px] top-[326px] whitespace-nowrap font-['Noto_Sans_CJK_SC',sans-serif] font-medium text-[96px] leading-[110px] text-[#ff4033]">实部数据</p>
        <svg viewBox="0 0 100 160" className="absolute left-[430px] top-[235px] w-[100px] h-[160px]" aria-hidden="true">
            <path d="M10 9l64 10M7 148l70-23" stroke="#e8361a" strokeWidth="4" />
            <path d="M94 21L71 28 74 8zM96 119l-23-4 7 20z" fill="#ff2d08" />
        </svg>
        <div className="absolute left-[529px] top-[244px] w-[55px] h-6 border-4 border-[#e8361a]"></div>
        <div className="absolute left-[529px] top-[341px] w-[55px] h-[26px] border-4 border-[#e8361a]"></div>
    </div>
);

const App = () => {
    return (
        <div className="relative w-full min-h-screen flex flex-col overflow-hidden bg-[#ababab] font-['Noto_Sans',sans-serif]">
            <header className="flex items-center gap-[2px] h-3 -ml-px bg-white font-['Inter',sans-serif] text-[8px] leading-3 text-gray-400 whitespace-nowrap">
                <OriginLogo />
                <span>OriginPro 9 64-bit - C:\Users\Administrator\Documents\OriginLab\90\User Files\UNTITLED - /Folder1/</span>
            </header>
            <div className="bg-[#f0f0fb] border-b border-[#8c8c92] overflow-hidden">
                <nav className="flex items-center gap-2 h-4 pl-2 text-[8px] leading-none text-[#1e1e3a]">
                    {menus.map((menu) => <button key={menu}>{menu}</button>)}
                </nav>
                <Toolbar label="Standard" items={standardBar} />
                <Toolbar label="Format" items={formatBar} />
            </div>

            <main className="flex-1 flex">
                <aside className="flex bg-[#eceefa] border-r border-[#77777d]">
                    <div className="w-3 self-start h-[226px] flex items-end gap-[14px] pt-[5px] border-b border-r border-gray-300 bg-[#f3f3f6] [writing-mode:vertical-rl] font-['Liberation_Mono'] text-[7px] leading-[7px] text-gray-500 whitespace-nowrap">
                        <span>Project Explorer (1)</span>
                        <span>Quick Help</span>
                        <span>Messages Log</span>
                    </div>
                    <ToolPalette />
                </aside>
                <div className="relative flex-1">
                    <BookWindow />
                </div>
            </main>

            <AsciiDialog />
            <Annotations />
        </div>
    );
};

export default App;
